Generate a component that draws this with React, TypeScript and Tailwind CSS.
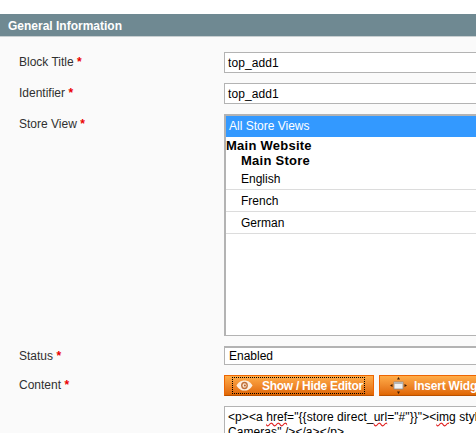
import type { ReactNode } from "react";

const STORES = ["English", "French", "German"];

function Field({ label, children, rowClass }: { label: string; children: ReactNode; rowClass: string }) {
  return (
    <div className={`flex ${rowClass}`}>
      <div className="w-[224px] shrink-0 pl-[19px] pt-[2px] text-[12px] leading-[16px] text-[#303030]">
        {label} <span className="font-bold text-[#eb0000]">*</span>
      </div>
      <div className="w-[300px] shrink-0">{children}</div>
    </div>
  );
}

function EyeIcon() {
  return (
    <svg width="17" height="11" viewBox="0 0 20 12" preserveAspectRatio="none" className="shrink-0">
      <path d="M0.5 6 C4 1 7 0.5 10 0.5 C13 0.5 16 1 19.5 6 C16 11 13 11.5 10 11.5 C7 11.5 4 11 0.5 6 Z" fill="#fdf0e2" />
      <circle cx="10" cy="6" r="4" fill="#c0703a" />
      <circle cx="10" cy="6" r="2.4" fill="#fbe3cc" />
      <circle cx="10.5" cy="6" r="1" fill="#a5521c" />
    </svg>
  );
}

function WidgetIcon() {
  return (
    <svg width="17" height="17" viewBox="0 0 17 17" className="shrink-0">
      <rect x="4" y="5" width="9" height="7" fill="#f2f2f2" stroke="#8c8c8c" strokeWidth="0.8" />
      <rect x="4" y="5" width="9" height="2" fill="#b5b5b5" />
      <path d="M8.5 0 L10 2.5 H7 Z M8.5 17 L7 14.5 H10 Z M0 8.5 L2.5 7 V10 Z M17 8.5 L14.5 10 V7 Z" fill="#3a1c06" />
    </svg>
  );
}

const btnClass =
  "flex h-[21px] items-center border border-[#ed6502] border-b-[#b85000] bg-gradient-to-b from-[#ffac47] to-[#df6600] text-[12px] font-bold text-white shrink-0";

export default function App() {
  return (
    <div
      className="h-[433px] w-[476px] overflow-hidden bg-white"
      style={{ fontFamily: '"Liberation Sans", Arial, sans-serif' }}
    >
      <div className="mt-[14px] h-[419px] bg-[#fafafa]">
        <div className="flex h-[23px] items-center border-b border-[#c8cfd1] bg-[#6f8992] pl-[8px] pt-[1px] text-[12px] font-bold text-white">
          General Information
        </div>

        <div className="pt-[15px]">
          <Field label="Block Title" rowClass="mb-[10px]">
            <div className="h-[21px] border border-[#b3b3b3] bg-white pl-[3px] text-[12px] leading-[20px] tracking-[0.1px] text-black">top_add1</div>
          </Field>
          <Field label="Identifier" rowClass="mb-[10px]">
            <div className="h-[21px] border border-[#b3b3b3] bg-white pl-[3px] text-[12px] leading-[20px] tracking-[0.1px] text-black">top_add1</div>
          </Field>
          <Field label="Store View" rowClass="mb-[10px]">
            <div className="h-[222px] border border-t-2 border-l-2 border-[#b3b3b3] bg-white text-[12px] text-black">
              <div className="h-[21px] bg-[#3399ff] pl-[3px] leading-[21px] text-white">All Store Views</div>
              <div className="pt-[1px] text-[13px] font-bold leading-[15px] tracking-[0.25px]">Main Website</div>
              <div className="pl-[15px] text-[13px] font-bold leading-[15px] tracking-[0.25px]">Main Store</div>
              {STORES.map((s) => (
                <div key={s} className="flex h-[22px] items-center border-b border-[#dcdcdc] pl-[15px] leading-[22px]">
                  {s}
                </div>
              ))}
            </div>
          </Field>
          <Field label="Status" rowClass="mb-[10px]">
            <div className="h-[19px] border border-t-2 border-[#b3b3b3] bg-white pl-[4px] text-[12px] leading-[16px] text-black">Enabled</div>
          </Field>
          <Field label="Content" rowClass="mb-[10px]">
            <div className="flex gap-[5px]">
              <div className={`${btnClass} w-[150px] pl-[7px]`}>
                <div className="flex h-[17px] w-[133px] items-center border border-dotted border-black pl-[3px]">
                  <EyeIcon />
                  <span className="pl-[9px] tracking-[-0.28px] whitespace-nowrap">Show / Hide Editor</span>
                </div>
              </div>
              <div className={`${btnClass} w-[130px] gap-[7px] pl-[10px]`}>
                <WidgetIcon />
                <span className="tracking-[-0.2px] whitespace-nowrap">Insert Widget...</span>
              </div>
            </div>
          </Field>
          <div className="flex">
            <div className="w-[224px] shrink-0" />
            <div className="h-[60px] w-[300px] shrink-0 border border-[#b3b3b3] bg-white pl-[3px] pt-[3px] text-[12px] leading-[15px] tracking-[0.07px] text-black">
              <div className="whitespace-nowrap">
                {"<p><a "}
                <span className="underline decoration-wavy decoration-[#e02020]">href</span>
                {'="{{store direct_'}
                <span className="underline decoration-wavy decoration-[#e02020]">url</span>
                {'="#"}}"><'}
                <span className="underline decoration-wavy decoration-[#e02020]">img</span>
                {" style"}
              </div>
              <div>{'Cameras" /></a></p>'}</div>
            </div>
          </div>
        </div>
      </div>
    </div>
  );
}
